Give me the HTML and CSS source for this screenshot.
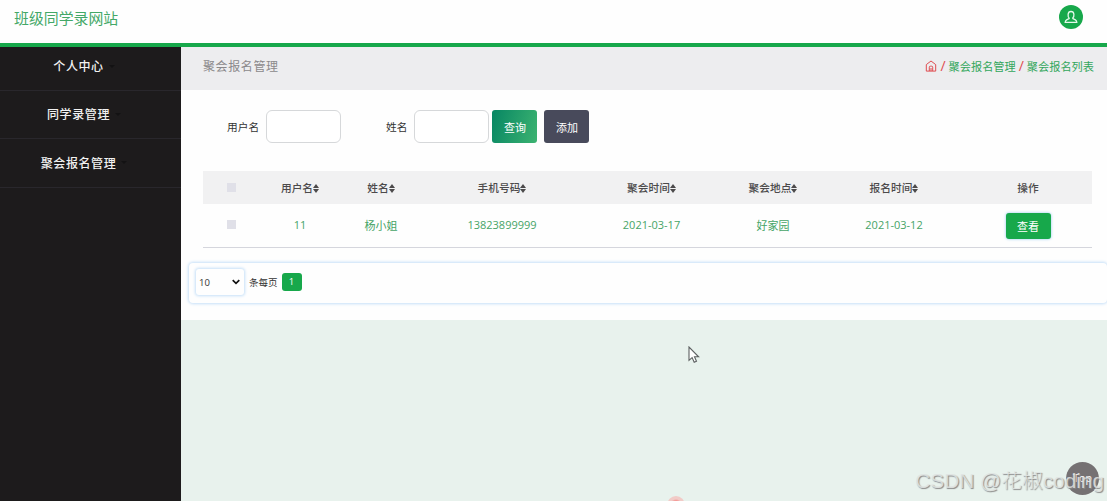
FILE: index.html
```
<!DOCTYPE html>
<html lang="zh-CN">
<head>
  <meta charset="UTF-8">
  <meta name="viewport" content="width=device-width, initial-scale=1.0">
  <title>聚会报名管理</title>
  <link rel="stylesheet" href="styles.css">
</head>
<body>
  <header class="header">
    <div class="logo">班级同学录网站</div>
    <a class="avatar">
      <svg width="14" height="14" viewBox="0 0 14 14" fill="none" stroke="#e4f8ea" stroke-width="1.3">
        <path d="M5.5 8.4C4.2 7.300 3.900 5.800 4.100 4.300 4.300 2.500 5.400 1.500 7 1.500s2.700 1 2.900 2.800c.2 1.500-.1 3-1.400 4.100"/>
        <path d="M5.500 8.400 2.600 9.900c-.9.500-1.300 1.200-1.400 2.500h11.600c-.1-1.300-.5-2-1.400-2.500L8.500 8.400"/>
      </svg>
    </a>
  </header>

  <div class="wrapper">
    <nav class="sidebar">
      <a class="menu-item">个人中心<span class="caret"></span></a>
      <a class="menu-item">同学录管理<span class="caret"></span></a>
      <a class="menu-item">聚会报名管理<span class="caret"></span></a>
    </nav>

    <main class="main">
      <div class="page-bar">
        <h3 class="page-title">聚会报名管理</h3>
        <div class="breadcrumb">
          <svg width="12" height="12" viewBox="0 0 12 12" fill="none" stroke="#df4c50" stroke-width="1">
            <path d="M1.300 4.600 6 1l4.700 3.600v6.500H1.300z"/>
            <path d="M4.300 11V7.200q0-1 1-1h1.400q1 0 1 1V11M6 8v3"/>
          </svg>
          <span class="sep">/</span>
          <a>聚会报名管理</a>
          <span class="sep">/</span>
          <a>聚会报名列表</a>
        </div>
      </div>

      <div class="content">
        <form class="search">
          <label for="username">用户名</label>
          <input class="field" id="username" type="text">
          <label class="label-name" for="realname">姓名</label>
          <input class="field" id="realname" type="text">
          <button class="btn btn-search" type="button">查询</button>
          <button class="btn btn-add" type="button">添加</button>
        </form>

        <table class="table">
          <colgroup>
            <col class="c-check"><col class="c-user"><col class="c-name"><col class="c-phone">
            <col class="c-date"><col class="c-place"><col class="c-signup"><col class="c-action">
          </colgroup>
          <thead>
            <tr>
              <th><span class="check"></span></th>
              <th>用户名<i class="sort"></i></th>
              <th>姓名<i class="sort"></i></th>
              <th>手机号码<i class="sort"></i></th>
              <th>聚会时间<i class="sort"></i></th>
              <th>聚会地点<i class="sort"></i></th>
              <th>报名时间<i class="sort"></i></th>
              <th>操作</th>
            </tr>
          </thead>
          <tbody>
            <tr>
              <td><span class="check"></span></td>
              <td>11</td>
              <td>杨小姐</td>
              <td>13823899999</td>
              <td>2021-03-17</td>
              <td>好家园</td>
              <td>2021-03-12</td>
              <td><button class="btn-view" type="button">查看</button></td>
            </tr>
          </tbody>
        </table>

        <div class="pager">
          <div class="page-size">
            <span>10</span>
            <svg width="8" height="6" viewBox="0 0 8 6" fill="none" stroke="#111" stroke-width="1.700">
              <path d="M.7 1.200 4 4.400l3.300-3.200"/>
            </svg>
          </div>
          <span>条每页</span>
          <a class="page-num">1</a>
        </div>
      </div>
    </main>
  </div>

  <svg class="cursor" width="12" height="18" viewBox="0 0 12 18" fill="#fff" stroke="#5d6162" stroke-width="1.100">
    <path d="M1 1v13.300l3.100-2.700 2.100 4.600 2.300-1-2-4.400h4.100z"/>
  </svg>
  <div class="pulse"></div>
  <div class="to-top">Top</div>
  <div class="watermark">CSDN @花椒coding</div>
</body>
</html>
```
FILE: styles.css
```
* {
  box-sizing: border-box;
}

body {
  margin: 0;
  height: 501px;
  display: flex;
  flex-direction: column;
  overflow: hidden;
  background: #fefefe;
  font-family: "Open Sans", "Noto Sans CJK SC", sans-serif;
  font-size: 10.7px;
  color: #333;
}

.header {
  height: 47px;
  flex: none;
  display: flex;
  justify-content: space-between;
  padding: 5px 24px 0 14px;
  border-bottom: 4px solid #17a84b;
}

.logo {
  font-size: 14.9px;
  line-height: 26px;
  color: #43a867;
}

.avatar {
  width: 24px;
  height: 24px;
  border-radius: 50%;
  background: #17a84b;
  display: flex;
  align-items: center;
  justify-content: center;
}

.wrapper {
  flex: 1;
  display: flex;
}

.sidebar {
  width: 181px;
  flex: none;
  background: #1d1b1c;
}

.menu-item {
  height: 48.5px;
  display: flex;
  align-items: center;
  justify-content: center;
  padding-right: 24px;
  border-bottom: 1px solid #29272c;
  color: #f2f2f2;
  font-size: 12px;
  font-weight: 500;
  letter-spacing: 0.6px;
}

.menu-item:first-child {
  height: 43.5px;
  padding-bottom: 4px;
}

.caret {
  margin-left: 5px;
  margin-right: -11px;
  border: 3px solid transparent;
  border-top-color: #131213;
  border-bottom: 0;
}

.main {
  flex: 1;
  min-width: 0;
  background: #e8f2ed;
}

.page-bar {
  height: 43px;
  display: flex;
  align-items: center;
  justify-content: space-between;
  padding: 0 13px 6px 22px;
  background: #ededef;
}

.page-title {
  margin: 0;
  font-size: 12px;
  font-weight: 400;
  letter-spacing: 0.6px;
  color: #8b898b;
}

.breadcrumb {
  display: flex;
  align-items: center;
  gap: 3px;
  font-size: 11.2px;
  color: #33a75c;
}

.sep {
  color: #df4c50;
  font-size: 14px;
  line-height: 16px;
}

.content {
  height: 230px;
  padding: 20px 0 0 22px;
  background: #fefefe;
}

.search {
  display: flex;
  align-items: center;
  height: 33px;
  padding-left: 24px;
}

.search label {
  padding-bottom: 1px;
}

.field {
  width: 75px;
  height: 33px;
  margin-left: 7px;
  border: 1px solid #d6d8da;
  border-radius: 6px;
  background: #fff;
}

.label-name {
  margin-left: 45px;
}

.btn {
  width: 45px;
  height: 33px;
  padding: 0;
  border: 0;
  border-radius: 3px;
  color: #fff;
  font: inherit;
  font-size: 11px;
}

.btn-search {
  margin-left: 3px;
  background: linear-gradient(105deg, #078663, #3cb371);
}

.btn-add {
  margin-left: 7px;
  background: #484a5b;
}

.table {
  width: 889px;
  margin-top: 28px;
  table-layout: fixed;
  border-collapse: collapse;
  text-align: center;
}

.table th,
.table td {
  padding: 0;
}

.table thead tr {
  height: 33px;
  background: #f1f1f2;
}

.table th {
  font-weight: 500;
  color: #4c4a4b;
}

.table tbody tr {
  height: 43px;
  border-bottom: 1px solid #d5d6dd;
}

.table td {
  padding-bottom: 1px;
  color: #46a467;
  font-size: 11px;
}

.c-check { width: 56px; }
.c-user { width: 82px; }
.c-name { width: 80px; }
.c-phone { width: 162px; }
.c-date { width: 137px; }
.c-place { width: 106px; }
.c-signup { width: 136px; }
.c-action { width: 130px; }

.table th:last-child,
.table td:last-child {
  padding-left: 2px;
}

.check {
  display: block;
  width: 9px;
  height: 9px;
  margin: 0 auto;
  background: #e0e0e8;
}

.sort {
  display: inline-flex;
  flex-direction: column;
  gap: 1px;
  margin-top: -1px;
  vertical-align: middle;
}

.sort::before,
.sort::after {
  content: "";
  border: 3px solid transparent;
}

.sort::before {
  border-top: 0;
  border-bottom: 4px solid #4c4a4b;
}

.sort::after {
  border-bottom: 0;
  border-top: 4px solid #4c4a4b;
}

.btn-view {
  width: 45px;
  height: 26px;
  margin-top: 2px;
  padding: 0;
  border: 0;
  border-radius: 3px;
  background: #17a84b;
  box-shadow: 0 0 3px #8ec5f0;
  color: #fff;
  font: inherit;
  vertical-align: middle;
}

.pager {
  height: 40px;
  margin: 15px 0 0 -14px;
  display: flex;
  align-items: center;
  padding: 0 0 1px 7px;
  border-radius: 4px;
  box-shadow: 0 0 3px 1px #c5dff8;
  font-size: 9.5px;
}

.page-size {
  width: 48px;
  height: 26px;
  margin-right: 5px;
  padding: 0 4px 0 3px;
  display: flex;
  align-items: center;
  justify-content: space-between;
  border-radius: 3px;
  box-shadow: 0 0 3px 1px #c5dff8;
}

.page-num {
  width: 20px;
  height: 18px;
  margin-left: 4px;
  border-radius: 3px;
  background: #17a84b;
  color: #fff;
  line-height: 18px;
  text-align: center;
}

.cursor {
  position: absolute;
  left: 688px;
  top: 346px;
}

.pulse {
  position: absolute;
  left: 667px;
  top: 496px;
  width: 18px;
  height: 18px;
  border-radius: 50%;
  background: radial-gradient(circle, #f58c8a 4px, #f1cbc7 6px);
}

.to-top {
  position: absolute;
  left: 1066px;
  top: 462px;
  width: 33px;
  height: 33px;
  border-radius: 50%;
  background: #757173;
  color: #fff;
  line-height: 33px;
  text-align: center;
}

.watermark {
  position: absolute;
  right: 3px;
  bottom: 4px;
  font-family: "Liberation Sans", "Noto Sans CJK SC", sans-serif;
  font-size: 20.8px;
  font-weight: 300;
  line-height: 32px;
  color: rgba(225, 229, 227, 0.85);
  text-shadow: 1px 1px 1px #8a8a8a;
  white-space: nowrap;
}
```
